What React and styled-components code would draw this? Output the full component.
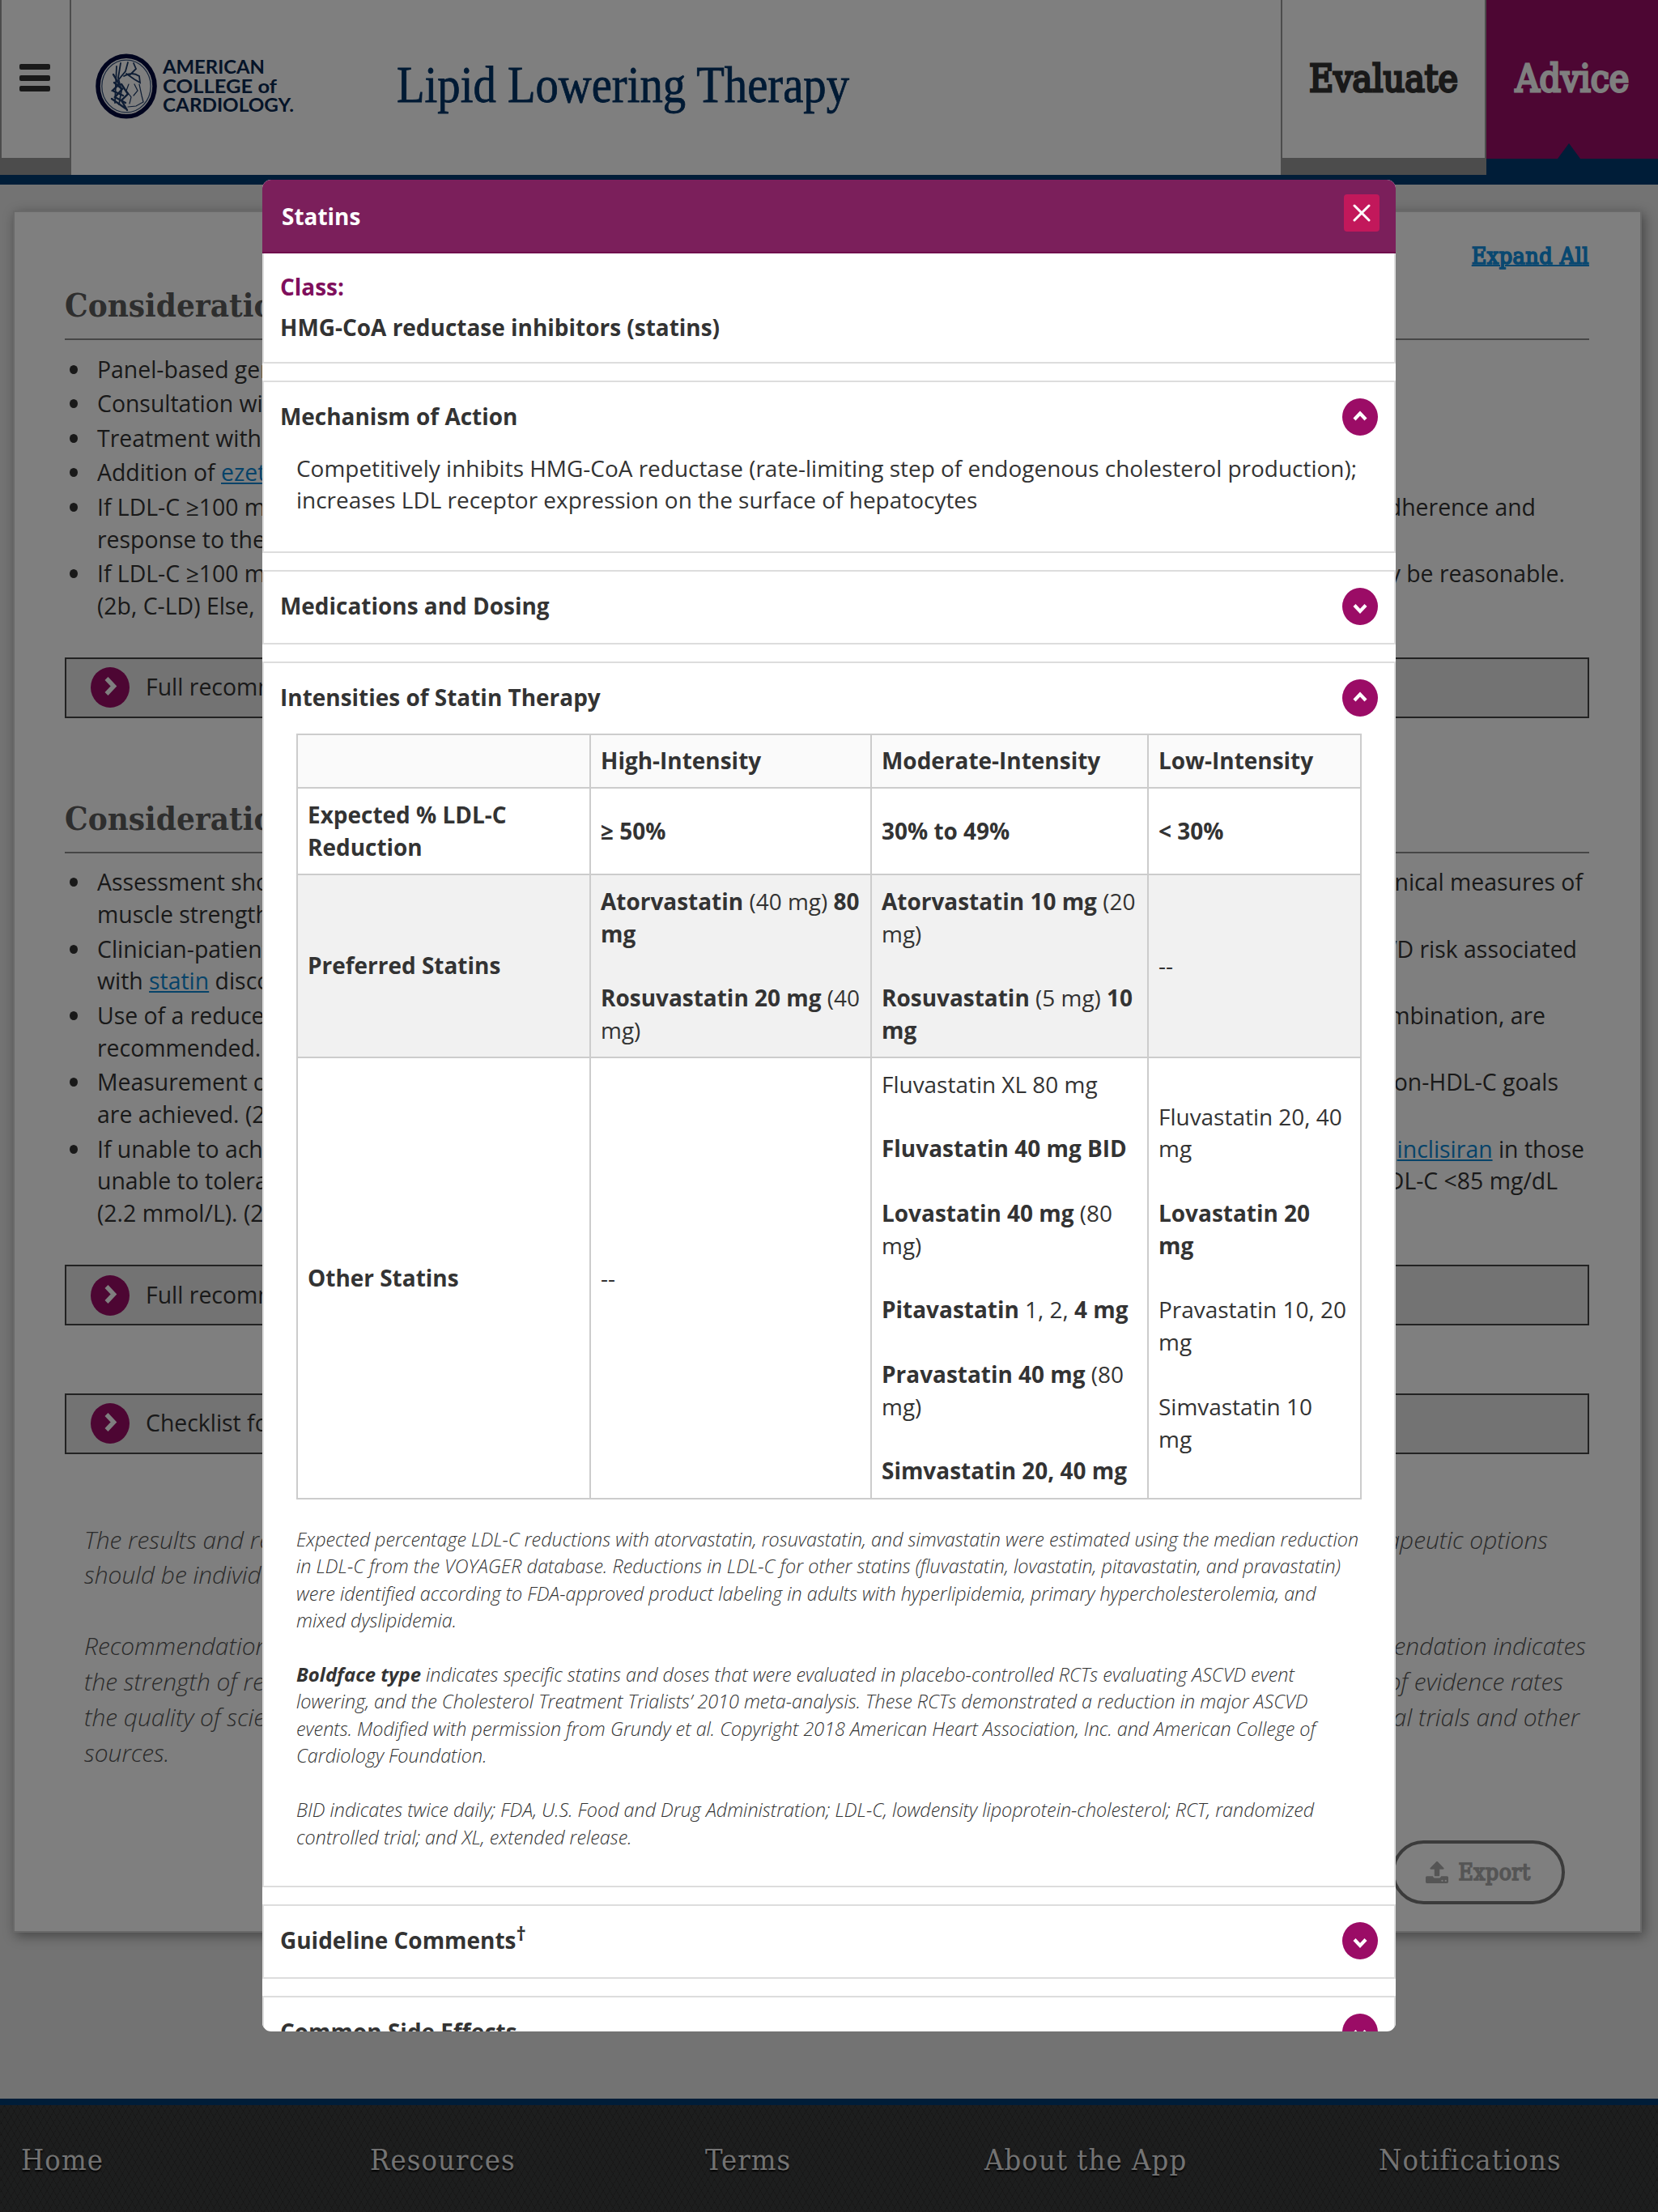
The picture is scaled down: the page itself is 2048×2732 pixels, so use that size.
import styled, { createGlobalStyle } from 'styled-components'

const GlobalStyle = createGlobalStyle`
  * {
    box-sizing: border-box;
  }
  body {
    margin: 0;
    background: #e6e6e6;
    color: #333;
    font-family: 'Open Sans', sans-serif;
    font-size: 28.4px;
    line-height: 39.78px;
    overflow: hidden;
  }
  p, h1, h2, h3, ul {
    margin: 0;
    padding: 0;
  }
  b {
    font-weight: 700;
  }
`

const slab = "'DejaVu Serif Condensed', 'DejaVu Serif', serif"

const Page = styled.div`
  display: flex;
  flex-direction: column;
  width: 2048px;
  height: 2732px;
`

/* top bar */

const TopBar = styled.header`
  display: flex;
  height: 228px;
  background: #fff;
  border-bottom: 12px solid #003a70;
`

const MenuButton = styled.div`
  display: flex;
  flex-direction: column;
  align-items: center;
  justify-content: center;
  gap: 6.5px;
  width: 88px;
  padding: 0 2px 3px 0;
  border: solid #999;
  border-width: 0 2px 21px;
`

const MenuBar = styled.span`
  width: 38px;
  height: 7px;
  border-radius: 2px;
  background: #333;
`

const Brand = styled.div`
  flex: 1;
`

const Tab = styled.div`
  display: flex;
  align-items: center;
  justify-content: center;
  width: ${(p) => (p.$active ? '212px' : '254px')};
  height: ${(p) => (p.$active ? '196px' : '216px')};
  border: solid #999;
  border-width: ${(p) => (p.$active ? '0' : '0 2px 21px')};
  background: ${(p) => (p.$active ? '#9b0c66' : '#fff')};
  color: ${(p) => (p.$active ? '#fff' : '#333')};
  font-family: ${slab};
  font-size: 46px;
  -webkit-text-stroke: 0.06em currentColor;
`

const ActiveTab = styled.div`
  position: relative;
  height: 216px;
  background: #003a70;

  &::after {
    content: '';
    position: absolute;
    top: 177px;
    left: 88px;
    border: solid transparent;
    border-width: 0 14px 19px;
    border-bottom-color: #003a70;
  }
`

/* page content */

const Main = styled.main`
  flex: 1;
  padding: 32px 20px 0 16px;
`

const Card = styled.section`
  height: 2127px;
  padding: 34px 63px 0 62px;
  background: #fff;
  border: 2px solid #d2d2d2;
  box-shadow: 3px 4px 14px rgba(0, 0, 0, 0.4);
`

const ExpandRow = styled.div`
  display: flex;
  justify-content: flex-end;
  height: 40px;
  padding-top: 1px;
`

const ExpandLink = styled.a`
  color: #1290e0;
  font-family: ${slab};
  font-size: 28.4px;
  letter-spacing: 0.5px;
  -webkit-text-stroke: 0.06em currentColor;
  text-decoration: underline;
  text-decoration-thickness: 2px;
`

const Heading = styled.h2`
  height: 84px;
  padding-top: 13px;
  margin-bottom: 16.5px;
  border-bottom: 2px solid #8c8c8c;
  color: #5c5c5c;
  font-family: ${slab};
  font-size: 40px;
  font-weight: 700;
  line-height: 56px;
`

const List = styled.ul`
  margin-bottom: 43px;
  list-style: none;
`

const Item = styled.li`
  position: relative;
  padding-left: 40px;
  margin-bottom: 2.8px;

  &::before {
    content: '';
    position: absolute;
    top: 14px;
    left: 6px;
    width: 10px;
    height: 11px;
    border-radius: 50%;
    background: #333;
  }
`

const Line = styled.div`
  display: flex;
  justify-content: space-between;
  width: ${(p) => p.$width || 400}px;
  white-space: nowrap;
`

const Link = styled.a`
  color: #0d86d2;
  text-decoration: underline;
`

const Bar = styled.div`
  display: flex;
  align-items: center;
  gap: 20px;
  height: 75px;
  padding-left: 30px;
  margin-bottom: ${(p) => p.$gap}px;
  background: #e6e6e6;
  border: 2px solid #444;
`

const Notice = styled.div`
  margin: 0 0 43.9px 24px;
  color: #555;
  font-size: 29.9px;
  font-style: italic;
  font-weight: 300;
  line-height: 43.9px;
`

const ExportRow = styled.div`
  display: flex;
  justify-content: flex-end;
  padding-right: 30px;
  margin-top: 86.5px;
`

const ExportButton = styled.div`
  display: flex;
  align-items: center;
  justify-content: center;
  gap: 12px;
  width: 214px;
  height: 79px;
  border: 4px solid #777;
  border-radius: 40px;
  color: #aaa;
  font-family: ${slab};
  font-size: 28px;
  letter-spacing: 0.5px;

  span {
    -webkit-text-stroke: 0.06em currentColor;
  }
`

const Footer = styled.footer`
  display: grid;
  grid-template-columns: 431px 414px 345px 487px auto;
  align-items: center;
  height: 140px;
  padding: 3px 0 0 26px;
  border-top: 8px solid #003a70;
  background-color: #3b3c3c;
  background-image: repeating-linear-gradient(60deg, rgba(0, 0, 0, 0.16) 0 1px, transparent 1px 7px),
    repeating-linear-gradient(-60deg, rgba(0, 0, 0, 0.16) 0 1px, transparent 1px 7px);
`

const FooterLink = styled.span`
  color: #e6e6e6;
  font-family: ${slab};
  font-size: 36px;
  letter-spacing: 1.1px;
  text-shadow: 0 2px 2px #000;
`

/* modal */

const Overlay = styled.div`
  position: absolute;
  top: 0;
  left: 0;
  display: flex;
  align-items: flex-start;
  justify-content: center;
  width: 2048px;
  height: 2732px;
  padding-top: 222px;
  background: rgba(0, 0, 0, 0.5);
`

const Modal = styled.div`
  width: 1400px;
  height: 2286.5px;
  border-radius: 11px;
  background: #fff;
  font-size: 27.96px;
  overflow: hidden;
`

const ModalHeader = styled.div`
  display: flex;
  align-items: center;
  justify-content: space-between;
  height: 91px;
  padding: 2px 20px 0 24px;
  border-bottom: 2px solid #6f0c4c;
  background: #7b1f5b;
  color: #fff;
  font-weight: 700;
`

const CloseButton = styled.div`
  display: flex;
  align-items: center;
  justify-content: center;
  width: 44px;
  height: 46px;
  margin-bottom: 9px;
  border-radius: 4px;
  background: #c2185b;
`

const Panel = styled.section`
  height: ${(p) => p.$height}px;
  margin-bottom: 21px;
  border: 2px solid #ddd;
`

const ClassPanel = styled(Panel)`
  padding: 22px 20px 0;
  border-top: 0;
  font-weight: 700;

  h3 {
    margin-bottom: 10.5px;
    color: #7f0f5c;
    font-size: inherit;
  }
`

const PanelHead = styled.div`
  display: flex;
  align-items: center;
  justify-content: space-between;
  height: 87px;
  padding: 0 20px 0 20px;

  h3 {
    font-size: inherit;
    font-weight: 700;
  }
  sup {
    font-size: 24px;
    line-height: 0;
  }
`

const PanelBody = styled.div`
  padding: 0 40px;
  white-space: nowrap;
`

const Table = styled.table`
  width: 1316px;
  table-layout: fixed;
  border-collapse: collapse;
`

const Row = styled.tr`
  background: ${(p) => p.$bg || '#fff'};
`

const Cell = styled.td`
  width: ${(p) => p.$width}px;
  padding: 12.6px 12px;
  border: 2px solid #ccc;
  font-weight: ${(p) => (p.$bold ? 700 : 400)};
  vertical-align: middle;
`

const Notes = styled.div`
  padding: 33px 0 0;
  font-size: 23.36px;
  font-style: italic;
  font-weight: 300;
  line-height: 33.46px;

  p {
    margin-bottom: 33.46px;
  }
  b {
    font-size: 23.9px;
    line-height: 0;
  }
`

const chevrons = {
  up: '15,26 22,18.5 29,26',
  down: '15,21.5 22,29 29,21.5',
  right: '19.5,14 28.5,23.5 19.5,33',
}

function Chevron({ dir, width = 44, height = 46 }) {
  return (
    <svg width={width} height={height} viewBox={`0 0 ${width} ${height}`}>
      <ellipse cx={width / 2} cy={height / 2} rx={width / 2} ry={height / 2} fill="#9b0c66" />
      <polyline points={chevrons[dir]} fill="none" stroke="#fff" strokeWidth={dir === 'right' ? 5.5 : 4.2} />
    </svg>
  )
}

function Logo() {
  return (
    <svg width="1100" height="216" viewBox="88 0 1100 216">
      <ellipse cx="156" cy="106.5" rx="35" ry="37.2" fill="#fff" stroke="#00083c" strokeWidth="5.6" />
      <ellipse cx="156" cy="106.5" rx="30.2" ry="32.4" fill="none" stroke="#35507a" strokeWidth="1.3" />
      <g fill="none" stroke="#1d3a68" strokeWidth="1.8" strokeLinecap="round">
        <path d="M144 82 L142 127 M149 78 L146 96 L150 112 L147 129 M158 77 L155 88 L146 99" />
        <path d="M165 78 L168 85 L161 92 M153 94 Q163 88 172 94 L173 102 L166 98 L156 91" />
        <path d="M140 92 L147 104 L139 112 L152 118 M141 102 L151 110 L142 120 L155 127" strokeWidth="2.4" />
        <path d="M150 104 L158 116 L150 124 L157 136 M138 122 L155 134" strokeWidth="2.4" />
        <path d="M159 104 L156 112 L162 120 L160 128 M166 104 L170 112 L165 118 M172 104 L175 118 L177 126 L168 131 L158 132" strokeWidth="1.2" />
      </g>
      <g fill="#0a2850" fontFamily="Lato, sans-serif" fontWeight="700" fontSize="22.6">
        <text x="201" y="91.3" textLength="126" lengthAdjust="spacingAndGlyphs">AMERICAN</text>
        <text x="201" y="114.7" textLength="141" lengthAdjust="spacingAndGlyphs">COLLEGE of</text>
        <text x="201" y="138" textLength="162" lengthAdjust="spacingAndGlyphs">CARDIOLOGY.</text>
      </g>
      <text
        x="490"
        y="126"
        textLength="559"
        lengthAdjust="spacingAndGlyphs"
        fill="#003468"
        stroke="#003468"
        strokeWidth="0.8"
        fontFamily="'Liberation Serif', serif"
        fontSize="63"
      >
        Lipid Lowering Therapy
      </text>
    </svg>
  )
}

function UploadIcon() {
  return (
    <svg width="28" height="27" viewBox="0 64 1664 1600" fill="currentColor">
      <path d="M1280 1472q0-26-19-45t-45-19-45 19-19 45 19 45 45 19 45-19 19-45zm256 0q0-26-19-45t-45-19-45 19-19 45 19 45 45 19 45-19 19-45zm128-224v320q0 40-28 68t-68 28h-1472q-40 0-68-28t-28-68v-320q0-40 28-68t68-28h427q21 56 70.500 92t110.500 36h256q61 0 110.500-36t70.500-92h427q40 0 68 28t28 68zm-325-648q-17 40-59 40h-256v448q0 26-19 45t-45 19h-256q-26 0-45-19t-19-45v-448h-256q-42 0-59-40-17-39 14-69l448-448q18-19 45-19t45 19l448 448q31 30 14 69z" />
    </svg>
  )
}

function Expander({ title, height, open, children }) {
  return (
    <Panel $height={height}>
      <PanelHead>
        <h3>{title}</h3>
        <Chevron dir={open ? 'up' : 'down'} />
      </PanelHead>
      {open && <PanelBody>{children}</PanelBody>}
    </Panel>
  )
}

function LinkBar({ label, gap }) {
  return (
    <Bar $gap={gap}>
      <Chevron dir="right" width={48} height={50} />
      <span>{label}</span>
    </Bar>
  )
}

function StatinTable() {
  return (
    <Table>
      <tbody>
        <Row $bg="#fafafa">
          <Cell $width={362} />
          <Cell $width={347} $bold>High-Intensity</Cell>
          <Cell $width={342} $bold>Moderate-Intensity</Cell>
          <Cell $width={263} $bold>Low-Intensity</Cell>
        </Row>
        <Row>
          <Cell $bold>Expected % LDL-C<br />Reduction</Cell>
          <Cell $bold>≥ 50%</Cell>
          <Cell $bold>30% to 49%</Cell>
          <Cell $bold>&lt; 30%</Cell>
        </Row>
        <Row $bg="#f1f1f1">
          <Cell $bold>Preferred Statins</Cell>
          <Cell>
            <b>Atorvastatin</b> (40 mg) <b>80<br />mg</b><br /><br />
            <b>Rosuvastatin 20 mg</b> (40<br />mg)
          </Cell>
          <Cell>
            <b>Atorvastatin 10 mg</b> (20<br />mg)<br /><br />
            <b>Rosuvastatin</b> (5 mg) <b>10<br />mg</b>
          </Cell>
          <Cell>--</Cell>
        </Row>
        <Row>
          <Cell $bold>Other Statins</Cell>
          <Cell>--</Cell>
          <Cell>
            Fluvastatin XL 80 mg<br /><br />
            <b>Fluvastatin 40 mg BID</b><br /><br />
            <b>Lovastatin 40 mg</b> (80<br />mg)<br /><br />
            <b>Pitavastatin</b> 1, 2, <b>4 mg</b><br /><br />
            <b>Pravastatin 40 mg</b> (80<br />mg)<br /><br />
            <b>Simvastatin 20, 40 mg</b>
          </Cell>
          <Cell>
            Fluvastatin 20, 40<br />mg<br /><br />
            <b>Lovastatin 20<br />mg</b><br /><br />
            Pravastatin 10, 20<br />mg<br /><br />
            Simvastatin 10<br />mg
          </Cell>
        </Row>
      </tbody>
    </Table>
  )
}

function StatinsModal() {
  return (
    <Overlay>
      <Modal>
        <ModalHeader>
          Statins
          <CloseButton>
            <svg width="22" height="22" viewBox="0 0 22 22">
              <path d="M2 2 L20 20 M20 2 L2 20" stroke="#fff" strokeWidth="3" strokeLinecap="round" />
            </svg>
          </CloseButton>
        </ModalHeader>
        <ClassPanel $height={135.5}>
          <h3>Class:</h3>
          <p>HMG-CoA reductase inhibitors (statins)</p>
        </ClassPanel>
        <Expander title="Mechanism of Action" height={213} open>
          Competitively inhibits HMG-CoA reductase (rate-limiting step of endogenous cholesterol production);
          <br />
          increases LDL receptor expression on the surface of hepatocytes
        </Expander>
        <Expander title="Medications and Dosing" height={92} />
        <Expander title="Intensities of Statin Therapy" height={1514} open>
          <StatinTable />
          <Notes>
            <p>
              Expected percentage LDL-C reductions with atorvastatin, rosuvastatin, and simvastatin were estimated using the median reduction<br />
              in LDL-C from the VOYAGER database. Reductions in LDL-C for other statins (fluvastatin, lovastatin, pitavastatin, and pravastatin)<br />
              were identified according to FDA-approved product labeling in adults with hyperlipidemia, primary hypercholesterolemia, and<br />
              mixed dyslipidemia.
            </p>
            <p>
              <b>Boldface type</b> indicates specific statins and doses that were evaluated in placebo-controlled RCTs evaluating ASCVD event<br />
              lowering, and the Cholesterol Treatment Trialists’ 2010 meta-analysis. These RCTs demonstrated a reduction in major ASCVD<br />
              events. Modified with permission from Grundy et al. Copyright 2018 American Heart Association, Inc. and American College of<br />
              Cardiology Foundation.
            </p>
            <p>
              BID indicates twice daily; FDA, U.S. Food and Drug Administration; LDL-C, lowdensity lipoprotein-cholesterol; RCT, randomized<br />
              controlled trial; and XL, extended release.
            </p>
          </Notes>
        </Expander>
        <Expander title={<>Guideline Comments<sup>†</sup></>} height={92} />
        <Expander title="Common Side Effects" height={92} />
      </Modal>
    </Overlay>
  )
}

export default function App() {
  return (
    <Page>
      <GlobalStyle />
      <TopBar>
        <MenuButton>
          <MenuBar />
          <MenuBar />
          <MenuBar />
        </MenuButton>
        <Brand>
          <Logo />
        </Brand>
        <Tab>Evaluate</Tab>
        <ActiveTab>
          <Tab $active>Advice</Tab>
        </ActiveTab>
      </TopBar>

      <Main>
        <Card>
          <ExpandRow>
            <ExpandLink>Expand All</ExpandLink>
          </ExpandRow>

          <Heading>Considerations</Heading>
          <List>
            <Item><Line>Panel-based genetic</Line></Item>
            <Item><Line>Consultation with</Line></Item>
            <Item><Line>Treatment with</Line></Item>
            <Item><Line><span>Addition of <Link>ezetimibe</Link></span></Line></Item>
            <Item>
              <Line $width={1777}><span>If LDL-C ≥100 mg/dL</span><span>adherence and</span></Line>
              <Line>response to therapy</Line>
            </Item>
            <Item>
              <Line $width={1813}><span>If LDL-C ≥100 mg/dL</span><span>may be reasonable.</span></Line>
              <Line>(2b, C-LD) Else,</Line>
            </Item>
          </List>
          <LinkBar label="Full recommendations" gap={83} />

          <Heading>Considerations</Heading>
          <List>
            <Item>
              <Line $width={1835}><span>Assessment should</span><span>clinical measures of</span></Line>
              <Line>muscle strength</Line>
            </Item>
            <Item>
              <Line $width={1828}><span>Clinician-patient</span><span>ASCVD risk associated</span></Line>
              <Line><span>with <Link>statin</Link> discontinuation</span></Line>
            </Item>
            <Item>
              <Line $width={1789}><span>Use of a reduced</span><span>combination, are</span></Line>
              <Line>recommended.</Line>
            </Item>
            <Item>
              <Line $width={1805}><span>Measurement of</span><span>non-HDL-C goals</span></Line>
              <Line>are achieved. (2a)</Line>
            </Item>
            <Item>
              <Line $width={1837}><span>If unable to achieve</span><span><Link>inclisiran</Link> in those</span></Line>
              <Line $width={1804}><span>unable to tolerate</span><span>LDL-C &lt;85 mg/dL</span></Line>
              <Line>(2.2 mmol/L). (2a)</Line>
            </Item>
          </List>
          <LinkBar label="Full recommendations" gap={83.5} />
          <LinkBar label="Checklist for" gap={84} />

          <Notice>
            <Line $width={1808}><span>The results and recommendations</span><span>therapeutic options</span></Line>
            <Line>should be individualized</Line>
          </Notice>
          <Notice>
            <Line $width={1855}><span>Recommendation</span><span>recommendation indicates</span></Line>
            <Line $width={1827}><span>the strength of recommendation</span><span>of evidence rates</span></Line>
            <Line $width={1847}><span>the quality of scientific</span><span>clinical trials and other</span></Line>
            <Line>sources.</Line>
          </Notice>

          <ExportRow>
            <ExportButton>
              <UploadIcon />
              <span>Export</span>
            </ExportButton>
          </ExportRow>
        </Card>
      </Main>

      <Footer>
        <FooterLink>Home</FooterLink>
        <FooterLink>Resources</FooterLink>
        <FooterLink>Terms</FooterLink>
        <FooterLink>About the App</FooterLink>
        <FooterLink>Notifications</FooterLink>
      </Footer>

      <StatinsModal />
    </Page>
  )
}
